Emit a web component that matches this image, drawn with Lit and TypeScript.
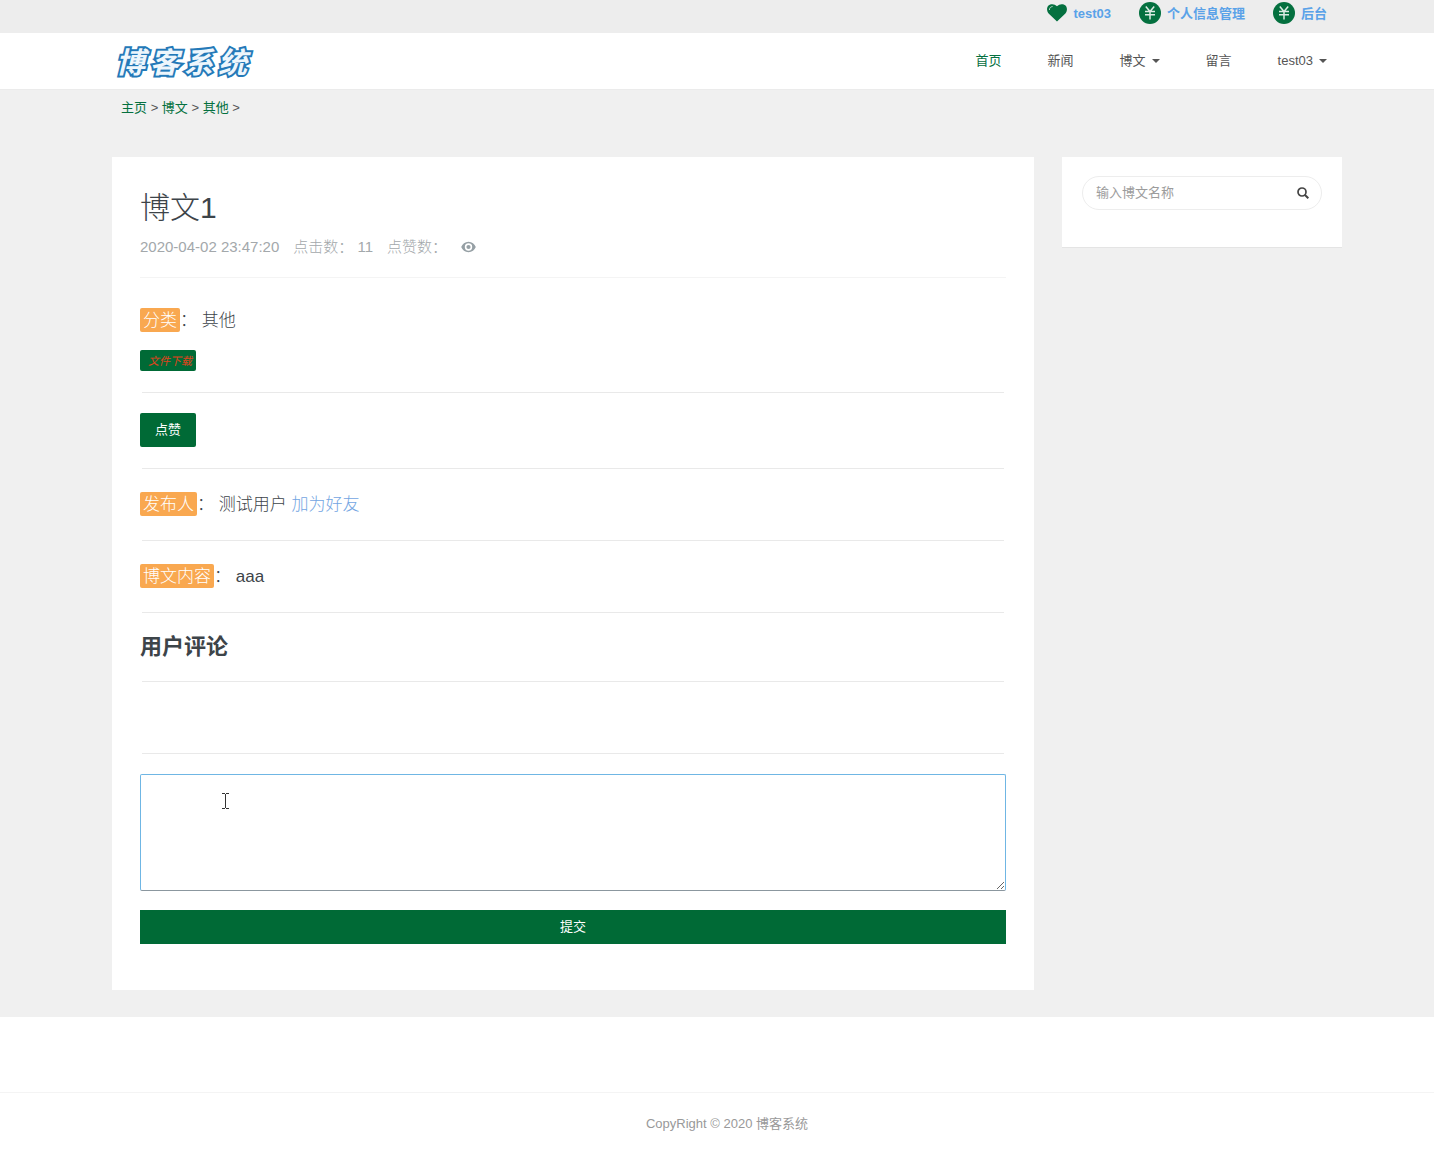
import { LitElement, html, css, svg } from "lit";
import { customElement, property } from "lit/decorators.js";

const yen = html`<svg class="coin" viewBox="0 0 22 22" aria-hidden="true">
  <circle cx="11" cy="11" r="11" fill="#04703f" />
  <path d="M6.800 4.600L11 9.600l4.200-5M6 9.600h10M6 12.800h10M11 9.600v7.800" fill="none" stroke="#dcebe3" stroke-width="1.500" />
</svg>`;

const heart = html`<svg class="heart" viewBox="0 0 20 18" aria-hidden="true">
  <path d="M10 17.600L1.600 9.400C-.4 7.200-.5 3.700 1.500 1.600 3.700-.5 7.600-.4 10 2.300 12.400-.4 16.300-.5 18.500 1.600c2 2.100 1.900 5.600-.1 7.800z" fill="#04703f" />
  <path d="M2.400 5.600c.1-1.700 1.200-2.900 2.800-3" fill="none" stroke="#b9d5c6" stroke-width="1" stroke-linecap="round" />
</svg>`;

const caretShape = svg`<path d="M0 0h8L4 4z" fill="currentColor" />`;

@customElement("nav-item")
class NavItem extends LitElement {
  @property() label = "";
  @property({ type: Boolean }) active = false;
  @property({ type: Boolean }) menu = false;

  static styles = css`
    :host { display: block; }
    .link { display: flex; align-items: center; gap: 6px; color: #555; text-decoration: none; line-height: 20px; }
    .active { color: #04703f; }
    .caret { width: 8px; height: 4px; }
  `;

  render() {
    return html`<a class="link ${this.active ? "active" : ""}" href="#">${this.label}${this.menu
      ? html`<svg class="caret" viewBox="0 0 8 4" aria-hidden="true">${caretShape}</svg>`
      : null}</a>`;
  }
}

@customElement("app-root")
class AppRoot extends LitElement {
  static styles = css`
    :host {
      display: block;
      background: #fff;
      color: #3d4449;
      font: 13px/20px "Liberation Sans", "Noto Sans CJK SC", sans-serif;
    }
    * { box-sizing: border-box; }
    a { text-decoration: none; }
    button, input, textarea { font: inherit; }

    .topbar { background: #ededed; }
    .top-links {
      display: flex; justify-content: flex-end; gap: 28px;
      height: 33px; padding: 2px 107px 0 112px;
    }
    .top-link { display: flex; align-items: flex-start; gap: 6px; color: #5aa2e8; font-weight: 700; line-height: 24px; }
    .heart { width: 20px; height: 18px; margin-top: 2px; }
    .coin { width: 22px; height: 22px; }

    .header {
      display: flex; align-items: center; justify-content: space-between;
      height: 56px; padding: 0 107px 0 116px; background: #fff;
    }
    .logo {
      display: flex; gap: 5px; padding-top: 4px;
      color: #eef6fc; font-size: 29px; line-height: 40px; font-weight: 700; font-style: italic;
      -webkit-text-stroke: 4px #2479b8; paint-order: stroke fill;
    }
    .nav { display: flex; gap: 46px; }

    .body { background: #f0f0f0; padding: 0 92px 27px 112px; border-top: 1px solid #ebebeb; }
    .crumbs { padding: 8px 9px 39px; color: #555; }
    .crumbs a { color: #04703f; }
    .columns { display: grid; grid-template-columns: minmax(0, 1fr) 280px; gap: 28px; align-items: start; }

    .article { background: #fff; padding: 31px 28px 46px; }
    .title { margin: 0 0 7px; font-size: 30px; line-height: 40px; font-weight: 300; }
    .meta {
      display: flex; align-items: center; gap: 14px; padding-bottom: 18px; margin-bottom: 27px;
      border-bottom: 1px solid #f4f4f4; color: #a3a8ab; font-size: 15px; line-height: 24px; font-weight: 300;
    }
    .eye { width: 15px; height: 12px; }
    .row { padding-top: 2px; font-size: 17px; line-height: 28px; min-height: 30px; font-weight: 300; }
    .tag { display: inline-block; padding: 2px 3px 0; line-height: 22px; border-radius: 2px; background: #f9a850; color: #fff; }
    .row a { color: #73a5e2; }
    .rule { height: 1px; margin: 21px 2px 20px; border: 0; background: #e9e9e9; }
    .btn { display: block; border: 0; border-radius: 2px; background: #006a36; color: #fff; cursor: pointer; }
    .download {
      width: 56px; height: 21px; margin-top: 15px; padding: 0 0 0 4px;
      color: #e0421c; font-size: 11px; font-style: italic; line-height: 20px;
    }
    .like { width: 56px; height: 34px; padding: 0; }
    .subtitle { margin: 0; font-size: 22px; line-height: 27px; font-weight: 700; }
    .editor { position: relative; }
    .comment {
      display: block; width: 100%; height: 117px; padding: 8px; outline: 0; resize: vertical;
      border: 1px solid #6fb6e4; border-bottom-color: #8b979f; border-radius: 2px; background: #fff;
    }
    .ibeam { position: absolute; left: 82px; top: 19px; width: 7px; height: 16px; pointer-events: none; }
    .submit { width: 100%; height: 34px; margin-top: 19px; border-radius: 0; }

    .search-card { background: #fff; padding: 19px 20px 37px; border-bottom: 1px solid #e4e4e4; }
    .search {
      display: flex; align-items: center; height: 34px; padding: 0 12px 0 13px;
      border: 1px solid #ededed; border-radius: 17px;
    }
    .query { flex: 1; min-width: 0; padding: 0; border: 0; outline: 0; background: none; }
    .query::placeholder { color: #9c9c9c; opacity: 1; }
    .find { display: flex; padding: 0; border: 0; background: none; cursor: pointer; }
    .glass { width: 12px; height: 12px; }

    .footer { padding-top: 75px; }
    .copyright {
      margin: 0; padding: 21px 92px 22px 112px; border-top: 1px solid #f4f4f4;
      color: #999; text-align: center;
    }
  `;

  render() {
    return html`<div lang="zh-CN">
      <div class="topbar">
        <div class="top-links">
          <a class="top-link" href="#">${heart}test03</a>
          <a class="top-link" href="#">${yen}个人信息管理</a>
          <a class="top-link" href="#">${yen}后台</a>
        </div>
      </div>
      <header class="header">
        <a class="logo" href="#">${[..."博客系统"].map((c) => html`<span>${c}</span>`)}</a>
        <nav class="nav">
          <nav-item label="首页" active></nav-item>
          <nav-item label="新闻"></nav-item>
          <nav-item label="博文" menu></nav-item>
          <nav-item label="留言"></nav-item>
          <nav-item label="test03" menu></nav-item>
        </nav>
      </header>
      <main class="body">
        <div class="crumbs"><a href="#">主页</a> &gt; <a href="#">博文</a> &gt; <a href="#">其他</a> &gt;</div>
        <div class="columns">
          <article class="article">
            <h1 class="title">博文1</h1>
            <div class="meta">
              <span>2020-04-02 23:47:20</span>
              <span>点击数： 11</span>
              <span>点赞数：</span>
              <svg class="eye" viewBox="0 0 15 12" aria-hidden="true">
                <path d="M7.500.8C4 .8 1.400 3.100.2 6c1.200 2.900 3.800 5.200 7.300 5.200s6.100-2.300 7.300-5.200C13.600 3.100 11 .8 7.500.8zm0 8.900a3.700 3.700 0 1 1 0-7.400 3.700 3.700 0 0 1 0 7.400z" fill="#96a0a5" fill-rule="evenodd" />
                <circle cx="7.500" cy="6" r="2.100" fill="#96a0a5" />
              </svg>
            </div>
            <div class="row"><span class="tag">分类</span>： 其他</div>
            <button class="btn download" type="button">文件下载</button>
            <hr class="rule" />
            <button class="btn like" type="button">点赞</button>
            <hr class="rule" />
            <div class="row"><span class="tag">发布人</span>： 测试用户 <a href="#">加为好友</a></div>
            <hr class="rule" />
            <div class="row"><span class="tag">博文内容</span>： aaa</div>
            <hr class="rule" />
            <h2 class="subtitle">用户评论</h2>
            <hr class="rule" />
            <div class="row"></div>
            <hr class="rule" />
            <form @submit=${(e: Event) => e.preventDefault()}>
              <div class="editor">
                <textarea class="comment" aria-label="用户评论"></textarea>
                <svg class="ibeam" viewBox="0 0 7 16" aria-hidden="true">
                  <path d="M0 .5h3M4 .5h3M3.500 1v14M0 15.500h3M4 15.500h3" fill="none" stroke="#333" />
                </svg>
              </div>
              <button class="btn submit" type="submit">提交</button>
            </form>
          </article>
          <aside class="search-card">
            <form class="search" role="search" @submit=${(e: Event) => e.preventDefault()}>
              <input class="query" type="text" placeholder="输入博文名称" aria-label="输入博文名称" />
              <button class="find" type="submit" aria-label="搜索">
                <svg class="glass" viewBox="0 0 12 12" aria-hidden="true">
                  <circle cx="5" cy="5" r="4" fill="none" stroke="#444" stroke-width="1.700" />
                  <path d="M8 8l3.300 3.300" stroke="#444" stroke-width="2" />
                </svg>
              </button>
            </form>
          </aside>
        </div>
      </main>
      <footer class="footer"><p class="copyright">CopyRight © 2020 博客系统</p></footer>
    </div>`;
  }
}
